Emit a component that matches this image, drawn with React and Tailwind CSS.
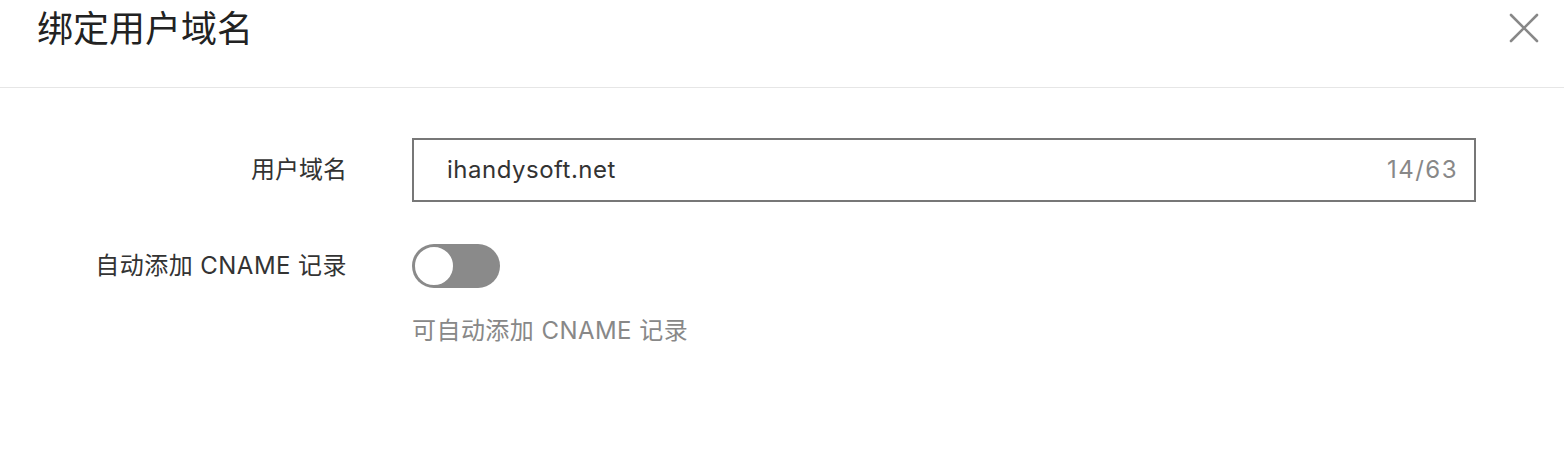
import { useState } from "react";

const font = {
  fontFamily: 'Inter, "Noto Sans CJK SC", sans-serif',
};

const App = () => {
  const [domain, setDomain] = useState("ihandysoft.net");
  const [autoCname, setAutoCname] = useState(false);

  return (
    <div className="w-[1564px] h-[476px] bg-white text-[#333]" style={font}>
      {/* header */}
      <div className="h-[88px] flex items-start justify-between border-b border-[#e6e6e6]">
        <h1 className="pl-[37px] pt-[7px] text-[36px] leading-[44px] text-[#222] font-normal">
          绑定用户域名
        </h1>
        <button className="mr-[24px] mt-[12px] w-[32px] h-[32px] flex items-center justify-center">
          <svg width="30" height="30" viewBox="0 0 30 30">
            <path
              d="M2 2 L28 28 M28 2 L2 28"
              stroke="#888"
              strokeWidth="2.6"
              strokeLinecap="round"
            />
          </svg>
        </button>
      </div>

      {/* form */}
      <div className="pt-[50px] flex flex-col">
        <div className="flex items-center">
          <label className="w-[347px] text-right text-[24px] text-[#333]">
            用户域名
          </label>
          <div className="ml-[65px] w-[1064px] h-[64px] border-2 border-[#777] flex items-center pl-[33px] pr-[16px]">
            <input
              value={domain}
              maxLength={63}
              onChange={(e) => setDomain(e.target.value)}
              className="flex-1 outline-none text-[24px] tracking-[0.5px] text-[#333] bg-transparent"
              style={font}
            />
            <span className="text-[24px] tracking-[1.5px] text-[#888]">
              {domain.length}/63
            </span>
          </div>
        </div>

        <div className="flex items-center mt-[42px]">
          <label className="w-[347px] text-right text-[24px] tracking-[0.45px] text-[#333]">
            自动添加 CNAME 记录
          </label>
          <button
            onClick={() => setAutoCname(!autoCname)}
            className="ml-[65px] w-[88px] h-[44px] rounded-full bg-[#8a8a8a] flex items-center p-[1px]"
          >
            <span className="w-[42px] h-[42px] rounded-full bg-white border-2 border-[#8a8a8a]" />
          </button>
        </div>

        <div className="ml-[412px] mt-[25px] text-[24px] tracking-[0.45px] text-[#888]">
          可自动添加 CNAME 记录
        </div>
      </div>
    </div>
  );
};

export default App;
